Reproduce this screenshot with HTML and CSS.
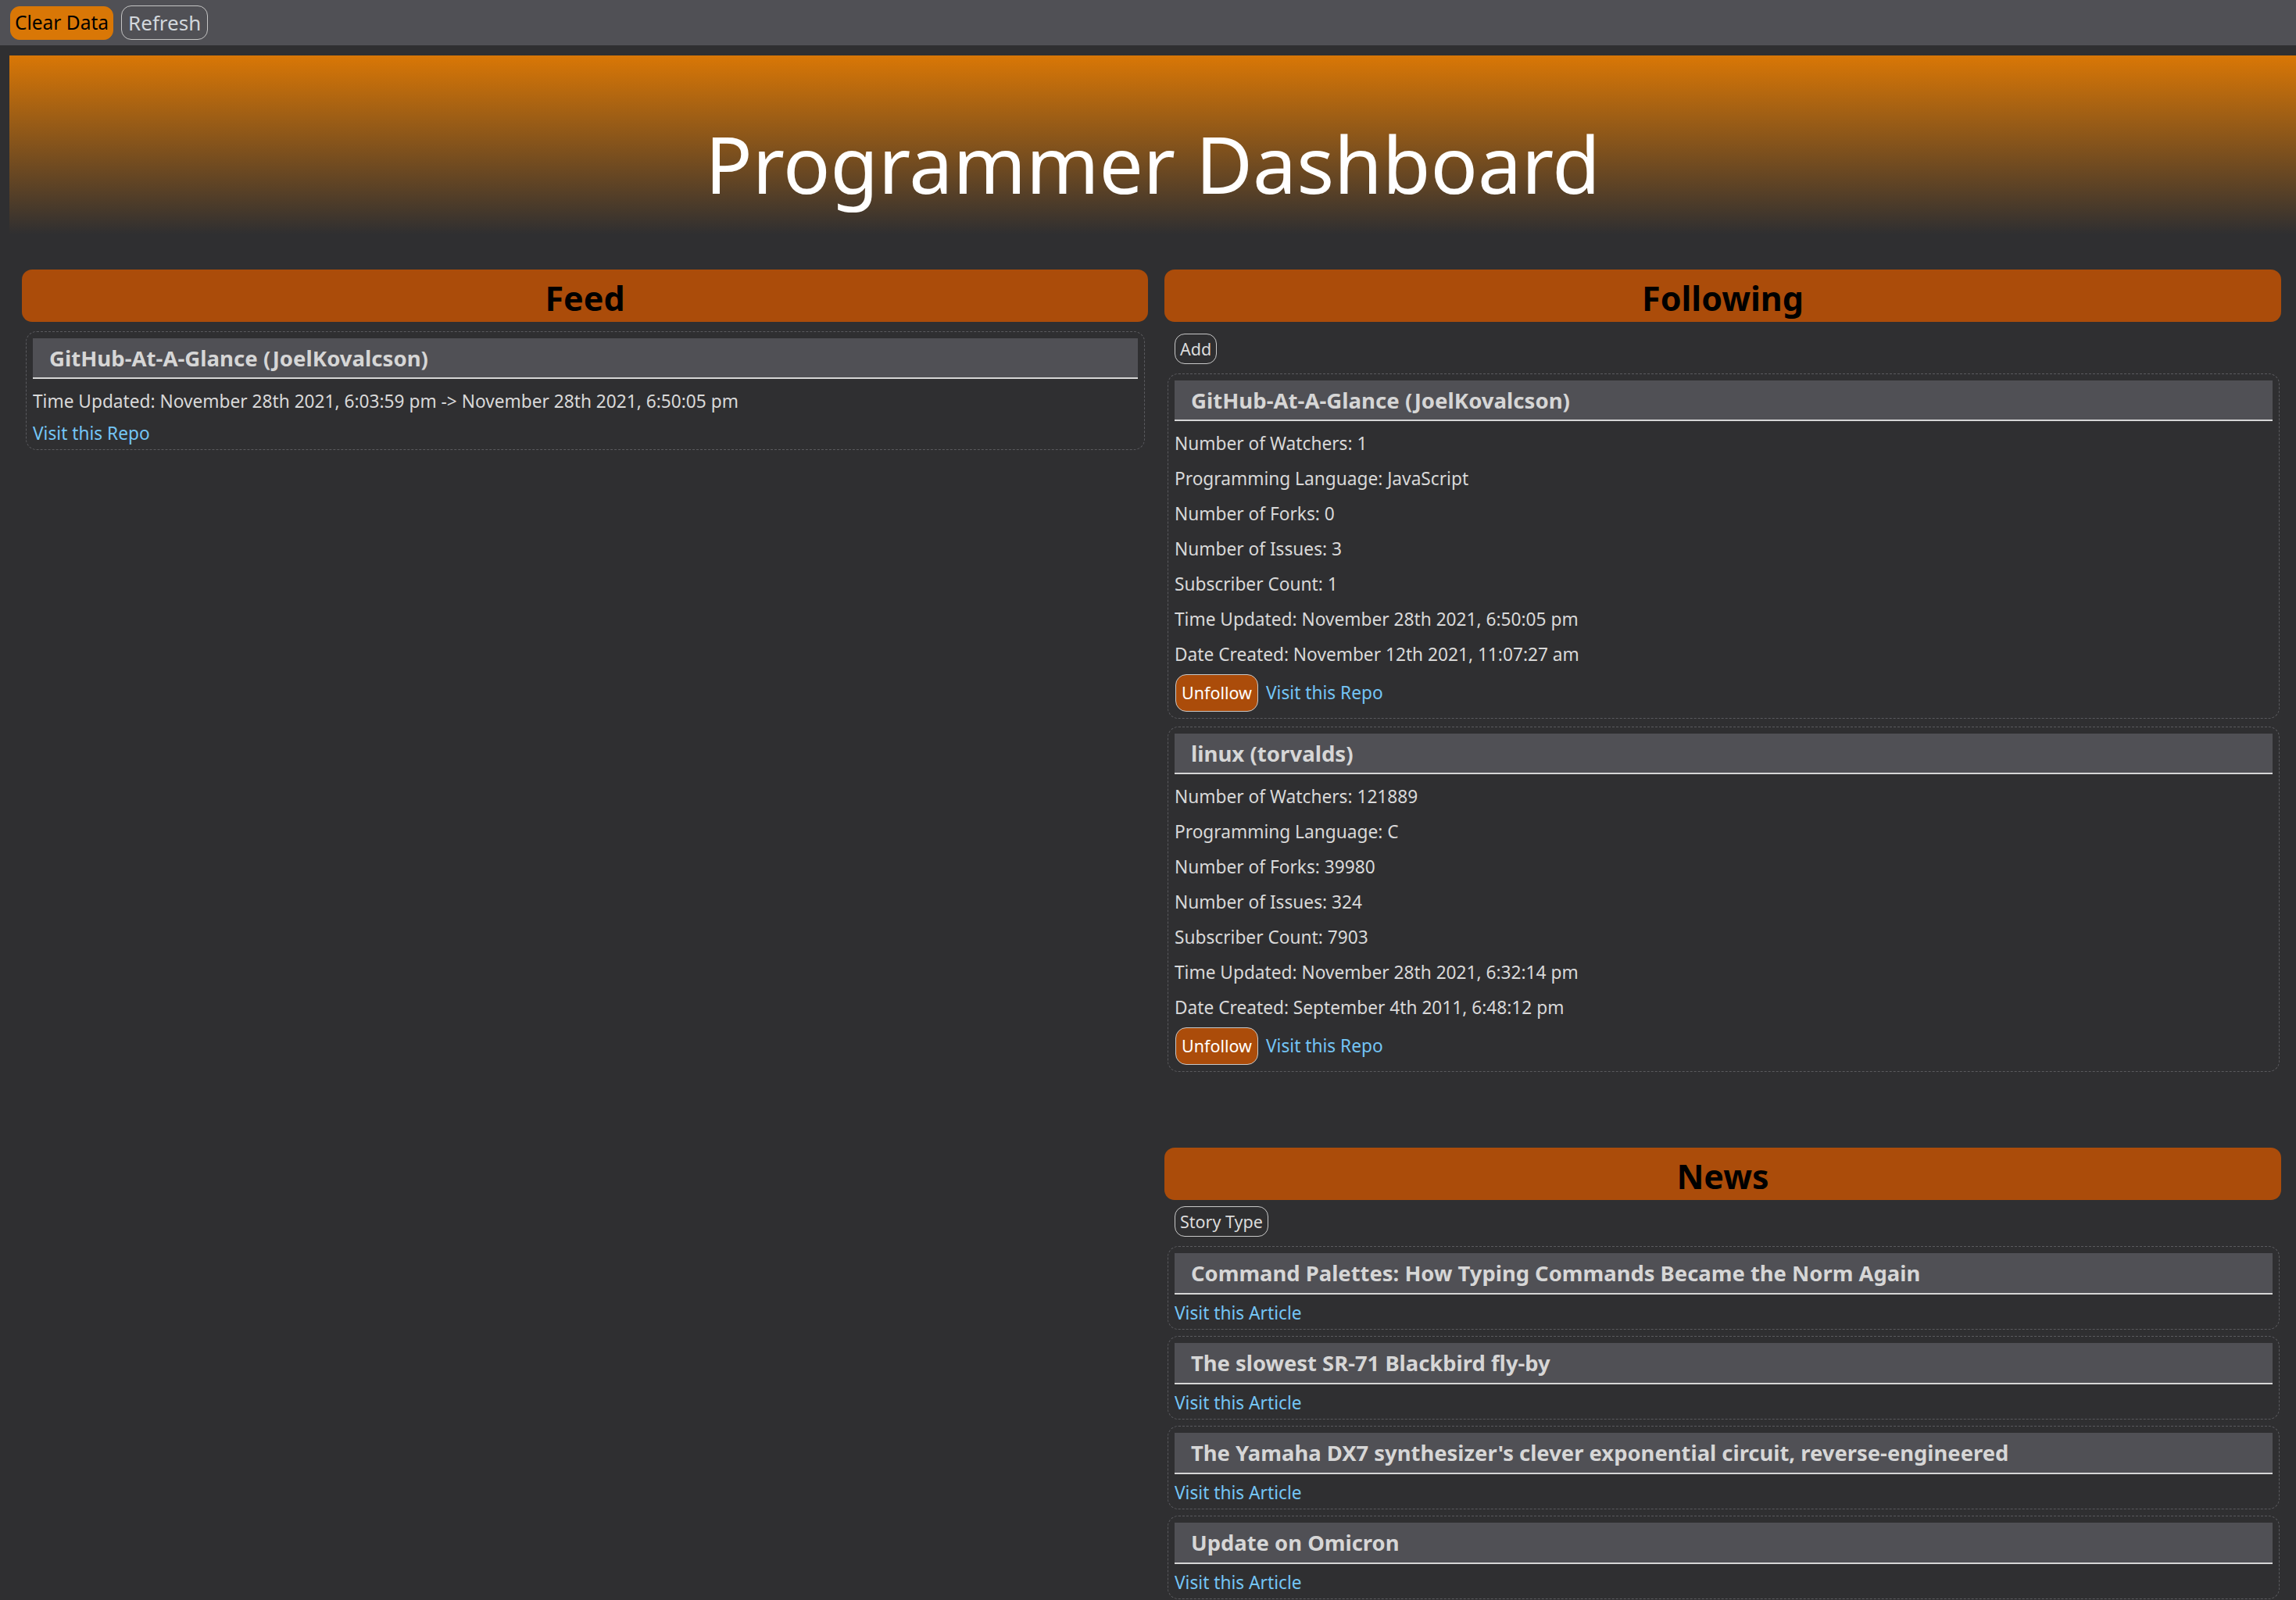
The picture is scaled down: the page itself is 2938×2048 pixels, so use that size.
FILE: index.html
```html
<!DOCTYPE html>
<html lang="en">
<head>
<meta charset="utf-8">
<title>Programmer Dashboard</title>
<link rel="stylesheet" href="styles.css">
</head>
<body>
<div class="topbar">
  <button class="btn btn-clear">Clear Data</button>
  <button class="btn btn-outline">Refresh</button>
</div>
<header class="hero"><h1>Programmer Dashboard</h1></header>
<main class="columns">
  <section class="col">
    <h2 class="bar">Feed</h2>
    <div class="list feed-list">
      <article class="card">
        <h3 class="card-title">GitHub-At-A-Glance (JoelKovalcson)</h3>
        <div class="info">
          <p class="line">Time Updated: November 28th 2021, 6:03:59 pm -&gt; November 28th 2021, 6:50:05 pm</p>
        </div>
        <a class="link feed-link" href="#">Visit this Repo</a>
      </article>
    </div>
  </section>
  <div class="col">
    <section class="following">
      <h2 class="bar">Following</h2>
      <div class="tools follow-tools"><button class="btn btn-small">Add</button></div>
      <div class="list side-list">
        <article class="card">
          <h3 class="card-title">GitHub-At-A-Glance (JoelKovalcson)</h3>
          <div class="info">
            <p class="line">Number of Watchers: 1</p>
            <p class="line">Programming Language: JavaScript</p>
            <p class="line">Number of Forks: 0</p>
            <p class="line">Number of Issues: 3</p>
            <p class="line">Subscriber Count: 1</p>
            <p class="line">Time Updated: November 28th 2021, 6:50:05 pm</p>
            <p class="line">Date Created: November 12th 2021, 11:07:27 am</p>
          </div>
          <div class="actions">
            <button class="btn btn-unfollow">Unfollow</button>
            <a class="link" href="#">Visit this Repo</a>
          </div>
        </article>
        <article class="card">
          <h3 class="card-title">linux (torvalds)</h3>
          <div class="info">
            <p class="line">Number of Watchers: 121889</p>
            <p class="line">Programming Language: C</p>
            <p class="line">Number of Forks: 39980</p>
            <p class="line">Number of Issues: 324</p>
            <p class="line">Subscriber Count: 7903</p>
            <p class="line">Time Updated: November 28th 2021, 6:32:14 pm</p>
            <p class="line">Date Created: September 4th 2011, 6:48:12 pm</p>
          </div>
          <div class="actions">
            <button class="btn btn-unfollow">Unfollow</button>
            <a class="link" href="#">Visit this Repo</a>
          </div>
        </article>
      </div>
    </section>
    <section class="news">
      <h2 class="bar">News</h2>
      <div class="tools news-tools"><button class="btn btn-small">Story Type</button></div>
      <div class="list side-list news-list">
        <article class="card news-card">
          <h3 class="card-title">Command Palettes: How Typing Commands Became the Norm Again</h3>
          <a class="link news-link" href="#">Visit this Article</a>
        </article>
        <article class="card news-card">
          <h3 class="card-title">The slowest SR-71 Blackbird fly-by</h3>
          <a class="link news-link" href="#">Visit this Article</a>
        </article>
        <article class="card news-card">
          <h3 class="card-title">The Yamaha DX7 synthesizer's clever exponential circuit, reverse-engineered</h3>
          <a class="link news-link" href="#">Visit this Article</a>
        </article>
        <article class="card news-card">
          <h3 class="card-title">Update on Omicron</h3>
          <a class="link news-link" href="#">Visit this Article</a>
        </article>
      </div>
    </section>
  </div>
</main>
</body>
</html>
```

FILE: styles.css
```css
html, body {
  margin: 0;
  padding: 0;
}

body {
  background: #2f2f31;
  color: #d9d9d9;
  font-family: "Noto Sans", "Open Sans", sans-serif;
  overflow: hidden;
}

.topbar {
  display: flex;
  align-items: center;
  gap: 10px;
  height: 58px;
  padding: 0 13px;
  box-sizing: border-box;
  background: #505055;
}

.btn {
  font-family: inherit;
  line-height: 1;
  box-sizing: border-box;
  cursor: pointer;
}

.btn-clear {
  height: 43px;
  padding: 0 5px;
  font-size: 24.5px;
  background: #d97706;
  color: #000;
  border: 1px solid #d97706;
  border-radius: 12px;
}

.btn-outline {
  height: 44px;
  padding: 0 8px;
  font-size: 26px;
  background: transparent;
  color: #d2d7dc;
  border: 1.5px solid #c4c4c4;
  border-radius: 13px;
}

.hero {
  margin: 13px 0 0 12px;
  height: 229px;
  box-sizing: border-box;
  padding-top: 88px;
  background: linear-gradient(#d97706, #2f2f31);
  text-align: center;
}

.hero h1 {
  margin: 0;
  font-size: 100px;
  line-height: 100px;
  font-weight: 400;
  color: #fff;
}

.columns {
  display: grid;
  grid-template-columns: 1441fr 1429fr;
  column-gap: 21px;
  padding: 45px 19px 0 28px;
  align-items: start;
}

.bar {
  margin: 0;
  height: 67px;
  box-sizing: border-box;
  padding-top: 5px;
  border-radius: 13px;
  background: #ab4c0a;
  color: #000;
  font-size: 43px;
  font-weight: 700;
  display: flex;
  align-items: center;
  justify-content: center;
}

.feed-list {
  margin: 12px 4px 0 5px;
}

.side-list {
  margin: 12px 2px 0 4px;
  display: flex;
  flex-direction: column;
  gap: 10px;
}

.news-list {
  gap: 8px;
}

.tools {
  margin-left: 13px;
}

.follow-tools {
  margin-top: 15px;
}

.news-tools {
  margin-top: 8px;
}

.btn-small {
  height: 39px;
  padding: 0 6px;
  font-size: 21.5px;
  background: transparent;
  color: #dcdcdc;
  border: 1px solid #c8c8c8;
  border-radius: 13px;
}

.news {
  margin-top: 97px;
}

.card {
  border: 1px dashed #5a5a5e;
  border-radius: 14px;
  padding: 8px;
}

.card-title {
  margin: 0;
  height: 50px;
  line-height: 50px;
  padding-left: 21px;
  background: #505055;
  border-bottom: 2px solid #d6d6d6;
  color: #d6d6d6;
  font-size: 27.6px;
  font-weight: 700;
  white-space: nowrap;
  overflow: hidden;
}

.news-card .card-title {
  height: 51px;
  line-height: 51px;
  font-size: 27.4px;
}

.info {
  padding-top: 6px;
}

.line {
  margin: 0;
  line-height: 45px;
  font-size: 22.7px;
  color: #d9d9d9;
}

.link {
  color: #74c5f5;
  text-decoration: none;
  font-size: 22.7px;
  line-height: 24px;
}

.feed-link,
.news-link {
  display: block;
  width: max-content;
}

.feed-link {
  margin-top: 7px;
}

.news-link {
  margin-top: 12px;
}

.actions {
  display: flex;
  align-items: center;
  gap: 10px;
  margin-top: 3px;
  padding-left: 1px;
}

.btn-unfollow {
  height: 48px;
  padding: 0 7px;
  font-size: 21.5px;
  background: #ab4c0a;
  color: #fff;
  border: 1px solid #c8c8c8;
  border-radius: 14px;
}
```
